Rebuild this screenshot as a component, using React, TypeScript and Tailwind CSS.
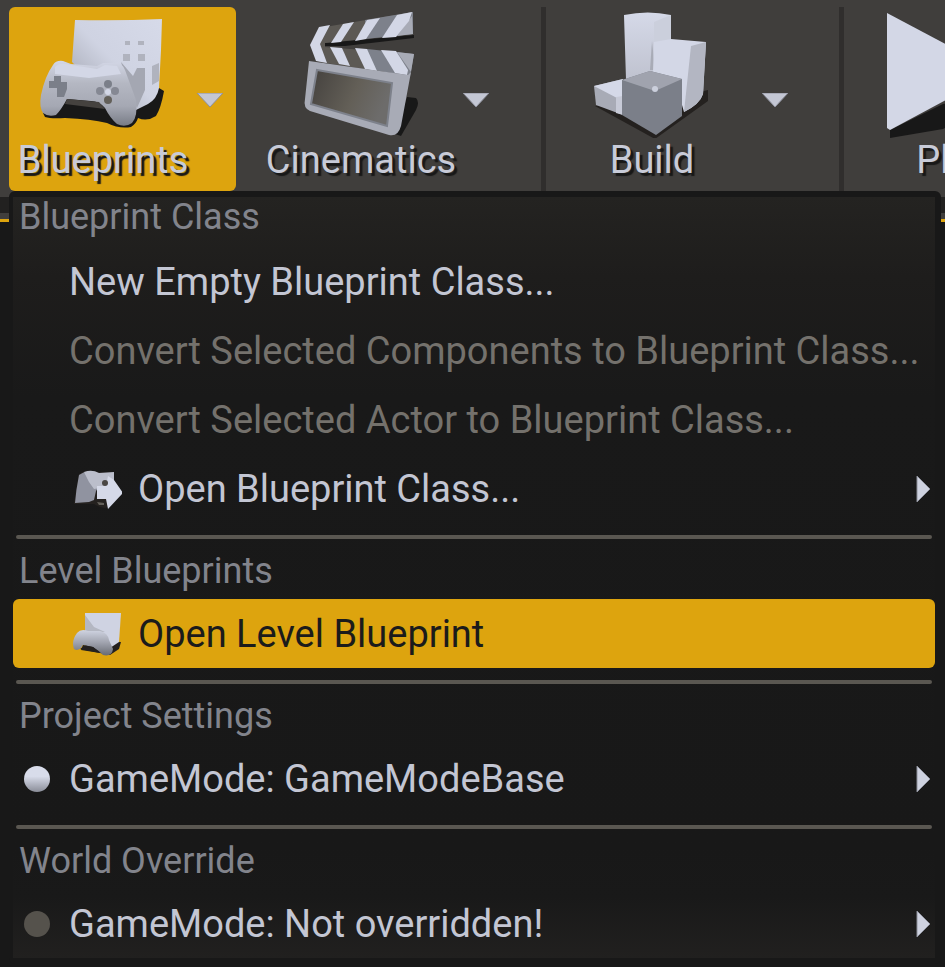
import type { ReactNode } from "react";

function BlueprintIcon() {
  return (
    <svg viewBox="39 12 130 126" className="h-[126px] w-[130px]" aria-hidden="true">
      <defs>
        <linearGradient id="bpPage" x1="0" y1="1" x2="1" y2="0">
          <stop offset="0" stopColor="#9a9da8" />
          <stop offset="0.5" stopColor="#cfd3e2" />
          <stop offset="1" stopColor="#d6dae9" />
        </linearGradient>
        <linearGradient id="bpPad" x1="0" y1="0" x2="0" y2="1">
          <stop offset="0" stopColor="#d3d7e6" />
          <stop offset="0.35" stopColor="#b4b7c2" />
          <stop offset="0.7" stopColor="#a5a8b3" />
          <stop offset="1" stopColor="#787c86" />
        </linearGradient>
      </defs>
      <path d="M44 113 L46 117 Q52 119 66 118 Q92 119 108 123 Q120 129 132 127 Q137 124 139 118 Q148 122 157 116 Q162 108 165 91 L160 88 L100 95 L60 100 Z" fill="#181818" />
      <path d="M76 20 Q120 21 163 19 L162 50 L160 88 Q158 99 149 104 L137 110 L100 90 L73 62 Z" fill="url(#bpPage)" />
      <path d="M122 62 L134 76 L138 68 L146 68 L146 90 L138 108 L132 96 Z" fill="#a4a7b2" />
      <path d="M126 41h5v4h-5zM139 41h6v4h-6zM124 54h7v7h-7zM139 54h7v7h-7zM153 66l7-3v18l-7 4z" fill="#b0b3be" />
      <path d="M54 65 Q57 60 64 61 L72 64 L98 66 L104 63 L118 63 Q124 64 126 70 L137 100 Q139 117 133 123 Q126 128 118 124 Q111 118 106 108 Q100 101 92 101 L68 99 Q62 110 57 115 Q49 117 44 113 Q40 107 42 95 Q46 76 54 65 Z" fill="url(#bpPad)" />
      <path d="M56 67 Q60 63 66 64 L98 69 L106 65 L118 66 L122 74 L90 78 L56 74 Z" fill="#d3d7e6" />
      <path d="M68 99 L100 102 L106 109 L66 104 Z" fill="#45423f" />
      <path d="M55 76h7v6h6v7l-3 8h-7v-9h-8v-7h5z" fill="#7b7f89" />
      <circle cx="109" cy="84" r="4" fill="#7b7f89" />
      <circle cx="101" cy="91" r="4" fill="#858893" />
      <circle cx="116" cy="91" r="4" fill="#858893" />
      <circle cx="109" cy="100" r="4" fill="#625f59" />
      <circle cx="109" cy="92" r="3" fill="#d3d7e6" />
    </svg>
  );
}

function ClapperIcon() {
  return (
    <svg viewBox="297 12 130 126" className="h-[126px] w-[130px]" aria-hidden="true">
      <defs>
        <linearGradient id="slate" x1="0" y1="0" x2="1" y2="0.3">
          <stop offset="0" stopColor="#44413e" />
          <stop offset="0.6" stopColor="#635f57" />
          <stop offset="1" stopColor="#6d6c6b" />
        </linearGradient>
      </defs>
      <path d="M408 97 L417 98 Q421 102 417 110 L402 136 L396 134 Z" fill="#181818" />
      <path d="M326 43 L415 35 L415 38 L346 46 L326 46 Z" fill="#181818" />
      <path d="M320 28 L414 12 L414 34 L326 43 L326 47 L415 54 L411 76 L320 62 L312 46 Z" fill="#5c5954" />
      <path d="M366 20 L414 12 L414 34 L366 39 Z M368 49 L415 54 L411 76 L368 69 Z" fill="#7d818b" />
      <path d="M413 16 L414 34 L398 36 Z M398 52 L415 54 L412 72 Z" fill="#a8abb6" />
      <g fill="#d3d7e6">
        <path d="M320 27 L331 25 L321 44 L328 63 L317 61 L311 45 Z" />
        <path d="M344 24 L355 22 L342 42 L332 43 Z" />
        <path d="M368 20 L381 18 L367 39 L356 41 Z" />
        <path d="M398 15 L413 12 L410 21 L397 37 L383 38 Z" />
        <path d="M331 47 L343 48 L351 66 L340 64 Z" />
        <path d="M356 48 L368 49 L378 71 L366 69 Z" />
        <path d="M382 50 L397 51 L409 70 L408 75 L396 73 Z" />
      </g>
      <path d="M310 61 L409 75 L412 72 L402 126 Q399 137 390 135 L311 111 Q304 108 306 99 Z" fill="#a8abb6" />
      <path d="M318 70 L393 83 L388 126 L312 104 Z" fill="url(#slate)" stroke="#7d818b" strokeWidth="2" />
    </svg>
  );
}

function BuildIcon() {
  return (
    <svg viewBox="587 12 130 126" className="h-[126px] w-[130px]" aria-hidden="true">
      <defs>
        <linearGradient id="tower" x1="0" y1="0" x2="0" y2="1">
          <stop offset="0" stopColor="#d5d9e8" />
          <stop offset="1" stopColor="#bfc2cf" />
        </linearGradient>
      </defs>
      <path d="M595 106 L655 139 L708 101 L708 90 L700 92 Z" fill="#24211f" />
      <path d="M624 15 Q648 10 671 15 L671 74 L626 80 Z" fill="url(#tower)" />
      <path d="M654 22 L671 15 L671 40 L654 43 Z" fill="#cbcfdc" />
      <path d="M652 41 L655 70 L650 70 Z" fill="#a8abb6" />
      <path d="M654 42 L671 39 L706 42 L703 94 Q700 104 684 112 L676 84 L653 72 Z" fill="#d3d7e6" />
      <path d="M691 46 L706 42 L703 94 Q700 104 684 112 Z" fill="#b3b6c2" />
      <path d="M594 86 L623 79 L623 115 L596 105 Z" fill="#a8abb6" />
      <path d="M594 86 L623 79 L623 97 L617 98 Z" fill="#d5d9e8" />
      <path d="M616 97 L623 96 L623 115 L616 113 Z" fill="#c7cad7" />
      <path d="M622 80 L650 71 L682 79 L682 116 L656 135 L622 115 Z" fill="#7b7f89" />
      <path d="M622 80 L650 71 L682 79 L655 91 Z" fill="#a0a3ae" />
      <circle cx="655" cy="89" r="3" fill="#cbcfdc" />
    </svg>
  );
}

function PlayIcon() {
  return (
    <svg viewBox="889 12 130 126" className="h-[126px] w-[130px]" aria-hidden="true">
      <path d="M892 138 L945 129 L1000 100 L945 104 L892 130 Z" fill="#181818" />
      <path d="M889 13 L1000 72 L892 130 L889 128 Z" fill="#d3d7e6" />
    </svg>
  );
}

function OpenClassIcon() {
  return (
    <svg viewBox="0 0 50 46" className="h-[46px] w-[50px]" aria-hidden="true">
      <path d="M7 8 Q14 3 26 6 L42 7 L42 36 L34 42 Q28 42 22 38 L2 38 Q4 22 7 8 Z" fill="#24211f" />
      <path d="M7 9 Q15 3 24 8 L28 19 L24 25 L22 34 L17 36 L3 37 Q4 24 7 9 Z" fill="#9093a0" />
      <path d="M12 6 Q20 3 27 7 L42 6 L42 20 L28 22 L22 23 L17 16 Z" fill="#bbbecb" />
      <path d="M25 20 L34 20 L36 10 L42 14 L51 27 L36 43 L34 33 L25 33 Z" fill="#d5d9e8" />
      <circle cx="33" cy="17" r="3" fill="#4a4744" />
      <path d="M25 36 L32 37 L32 39 L27 39 Z" fill="#625f59" />
    </svg>
  );
}

function OpenLevelIcon() {
  return (
    <svg viewBox="0 0 50 46" className="h-[46px] w-[50px]" aria-hidden="true">
      <defs>
        <linearGradient id="smallPad" x1="0" y1="0" x2="0" y2="1">
          <stop offset="0" stopColor="#d0d4e2" />
          <stop offset="0.5" stopColor="#a0a3ae" />
          <stop offset="1" stopColor="#686b73" />
        </linearGradient>
      </defs>
      <path d="M8 38 L28 42 L38 44 L47 38 L49 31 L20 30 Z" fill="#24211f" />
      <path d="M13 2 L49 2 L47 31 L38 37 L13 22 Z" fill="#cfd3e2" />
      <path d="M13 4 L22 16 L33 21 L13 21 Z" fill="#b4b7c2" />
      <path d="M5 22 Q9 17 16 20 L28 20 Q36 22 37 29 L41 38 Q40 46 31 44 Q26 39 21 36 L11 34 Q7 41 2 38 Q-1 30 5 22 Z" fill="url(#smallPad)" />
      <path d="M11 34 L21 36 L28 42 L9 39 Z" fill="#24211f" />
    </svg>
  );
}

function Caret() {
  return (
    <svg viewBox="0 0 26 14" className="mt-1.5 h-[14px] w-[26px] shrink-0" aria-hidden="true">
      <path d="M0 0H26L13 14Z" fill="#c4c7d4" stroke="#8d909b" strokeWidth="1" />
    </svg>
  );
}

function ToolButton({ icon, label, className, caret = true }: {
  icon: ReactNode;
  label: string;
  className: string;
  caret?: boolean;
}) {
  return (
    <button type="button" className={`flex shrink-0 items-center rounded-md pt-[5px] pb-[9px] ${className}`}>
      <span className="flex w-[188px] flex-col items-center">
        {icon}
        <span className="text-[38px] leading-[44px] [text-shadow:3px_3px_1px_#181818]">{label}</span>
      </span>
      {caret && <Caret />}
    </button>
  );
}

function Divider() {
  return <div className="w-[5px] shrink-0 self-stretch bg-[#302e2d]" />;
}

function Dot({ on }: { on: boolean }) {
  return (
    <span
      className={`ml-[11px] mr-[19px] size-[26px] rounded-full ${
        on ? "bg-linear-to-b from-[#d8dcea] from-40% to-[#8a8d98]" : "bg-[#55524c]"
      }`}
    />
  );
}

function MenuItem({ label, icon, dot, submenu = false, disabled = false, active = false }: {
  label: string;
  icon?: ReactNode;
  dot?: ReactNode;
  submenu?: boolean;
  disabled?: boolean;
  active?: boolean;
}) {
  const tone = active ? "bg-[#dda40e] text-[#1b1b1b]" : disabled ? "text-[#74716c]" : "text-[#c3c6d3]";
  return (
    <button
      type="button"
      role="menuitem"
      disabled={disabled}
      aria-haspopup={submenu ? "menu" : undefined}
      className={`flex h-[69px] w-full items-center rounded-md pr-[5px] text-left text-[38px] leading-[44px] ${tone}`}
    >
      {dot ?? <span className="w-[56px] shrink-0" />}
      {icon && <span className="ml-[3px] mr-[16px] shrink-0">{icon}</span>}
      <span className="grow whitespace-nowrap">{label}</span>
      {submenu && (
        <svg viewBox="0 0 14 26" className="h-[26px] w-[14px] shrink-0" aria-hidden="true">
          <path d="M1 0L14 13L1 26Z" fill="#ced2e0" stroke="#8d909b" strokeWidth="1" />
        </svg>
      )}
    </button>
  );
}

function Section({ title, children, first = false }: { title: string; children: ReactNode; first?: boolean }) {
  return (
    <section aria-label={title} className={first ? "" : "mt-3"}>
      {!first && <hr className="mx-[3px] mb-3 h-1 rounded-full border-0 bg-[#5a5751]" />}
      <h2 className={`pl-[6px] text-[36px] leading-[40px] text-[#82848c] ${first ? "mb-[10px]" : "mb-2"}`}>{title}</h2>
      {children}
    </section>
  );
}

export default function App() {
  return (
    <div className="min-h-screen overflow-hidden bg-[#181818] font-[Roboto,'Liberation_Sans',sans-serif]">
      <header className="flex overflow-hidden bg-[#403e3c] pl-[9px] pt-[7px] text-[#c8cbd8]">
        <ToolButton icon={<BlueprintIcon />} label="Blueprints" className="w-[227px] bg-[#dda40e]" />
        <ToolButton icon={<ClapperIcon />} label="Cinematics" className="w-[305px] gap-2 pl-[31px]" />
        <Divider />
        <ToolButton icon={<BuildIcon />} label="Build" className="w-[293px] gap-4 pl-[12px]" />
        <Divider />
        <ToolButton icon={<PlayIcon />} label="Play" className="pl-[14px]" caret={false} />
      </header>
      <main className="bg-[linear-gradient(#403e3c_0_6px,#222120_6px_22px,#403e3c_22px_28px,#dda40e_28px_31px,#181818_31px)] pl-[9px] pr-1">
        <div
          role="menu"
          aria-label="Blueprints"
          className="rounded-md border-y-[6px] border-l-[4px] border-r-[6px] border-[#181818] bg-[linear-gradient(#242321,#1e1d1c_80px,#191919_200px,#181818_650px,#191919_700px,#21201f)]"
        >
          <Section title="Blueprint Class" first>
            <MenuItem label="New Empty Blueprint Class..." />
            <MenuItem label="Convert Selected Components to Blueprint Class..." disabled />
            <MenuItem label="Convert Selected Actor to Blueprint Class..." disabled />
            <MenuItem label="Open Blueprint Class..." icon={<OpenClassIcon />} submenu />
          </Section>
          <Section title="Level Blueprints">
            <MenuItem label="Open Level Blueprint" icon={<OpenLevelIcon />} active />
          </Section>
          <Section title="Project Settings">
            <MenuItem label="GameMode: GameModeBase" dot={<Dot on />} submenu />
          </Section>
          <Section title="World Override">
            <MenuItem label="GameMode: Not overridden!" dot={<Dot on={false} />} submenu />
          </Section>
        </div>
      </main>
    </div>
  );
}
